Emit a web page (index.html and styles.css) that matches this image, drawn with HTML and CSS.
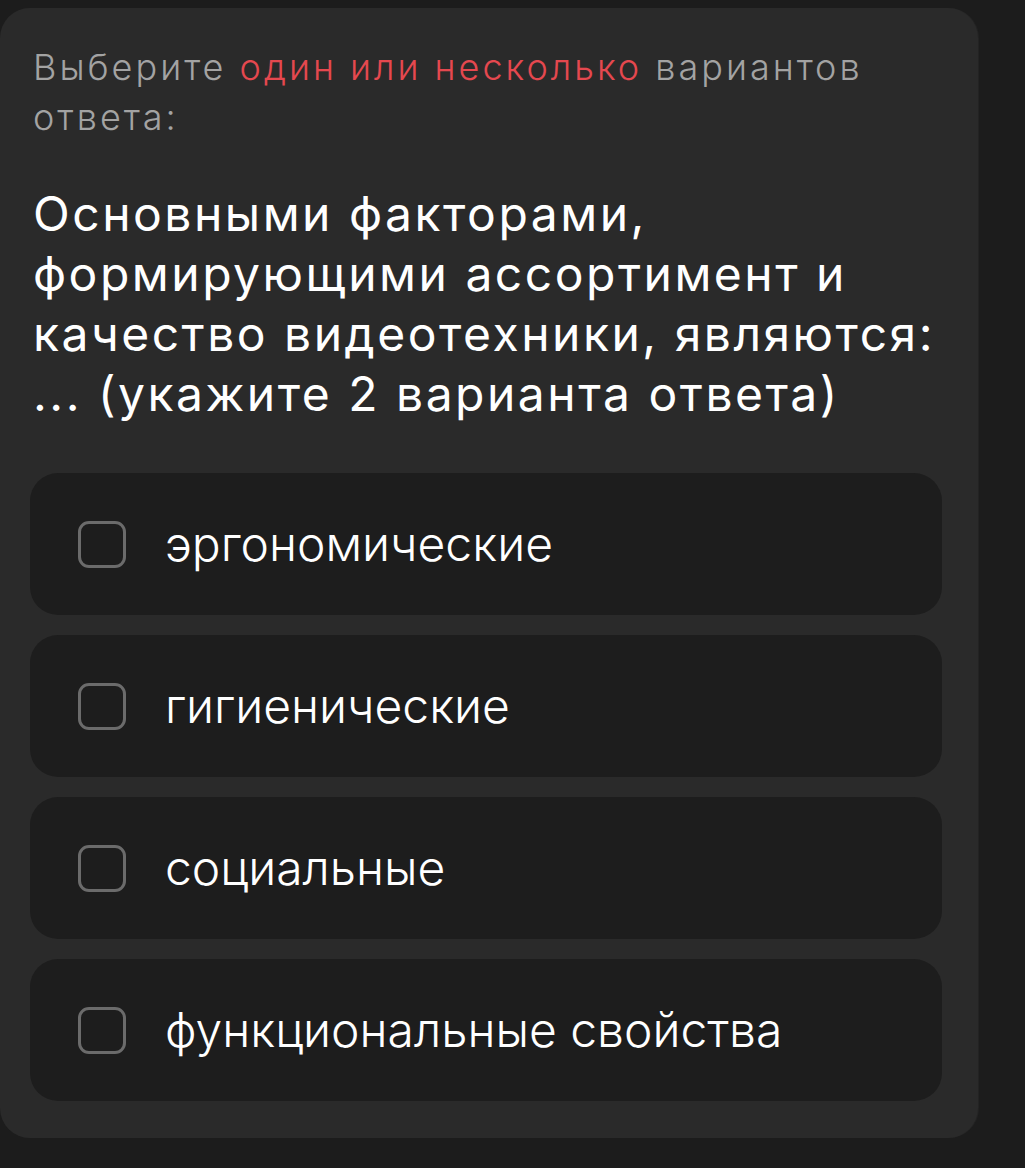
FILE: index.html
```html
<!DOCTYPE html>
<html lang="ru">
<head>
<meta charset="utf-8">
<link rel="stylesheet" href="styles.css">
</head>
<body>
<div class="card">
  <p class="hint">Выберите <span class="accent">один или несколько</span> вариантов<br>ответа:</p>
  <h1 class="question">Основными факторами,<br>формирующими ассортимент и<br>качество видеотехники, являются:<br>... (укажите 2 варианта ответа)</h1>
  <ul class="options">
    <li class="option"><span class="box"></span><span class="label">эргономические</span></li>
    <li class="option"><span class="box"></span><span class="label">гигиенические</span></li>
    <li class="option"><span class="box"></span><span class="label">социальные</span></li>
    <li class="option"><span class="box"></span><span class="label">функциональные свойства</span></li>
  </ul>
</div>
</body>
</html>
```
FILE: styles.css
```css
html, body {
  margin: 0;
  padding: 0;
  background: #1c1c1c;
}
body {
  font-family: Inter, "Open Sans", sans-serif;
  height: 1168px;
  overflow: hidden;
}
.card {
  margin-top: 8px;
  width: 978px;
  box-sizing: border-box;
  background: #2a2a2a;
  border-radius: 30px;
  padding: 34px 36px 37px 30px;
  box-shadow: 1px 0 0 #232323;
}
.hint {
  margin: 0 0 0 3px;
  font-size: 36px;
  line-height: 50px;
  font-weight: 300;
  letter-spacing: 3px;
  color: #a3a3a3;
}
.accent {
  color: #e5484f;
}
.question {
  margin: 42px 0 0 3px;
  font-size: 48px;
  line-height: 60px;
  font-weight: 400;
  letter-spacing: 2.5px;
  color: #ffffff;
}
.options {
  list-style: none;
  margin: 49px 0 0 0;
  padding: 0;
  display: flex;
  flex-direction: column;
  gap: 20px;
}
.option {
  height: 142px;
  background: #1d1d1d;
  border-radius: 28px;
  display: flex;
  align-items: center;
  padding-left: 48px;
  gap: 39px;
}
.box {
  width: 48px;
  height: 47px;
  box-sizing: border-box;
  border: 3px solid #6b6b6b;
  border-radius: 11px;
  flex: none;
}
.label {
  font-size: 48px;
  font-weight: 300;
  color: #ffffff;
  line-height: 1;
}
```
